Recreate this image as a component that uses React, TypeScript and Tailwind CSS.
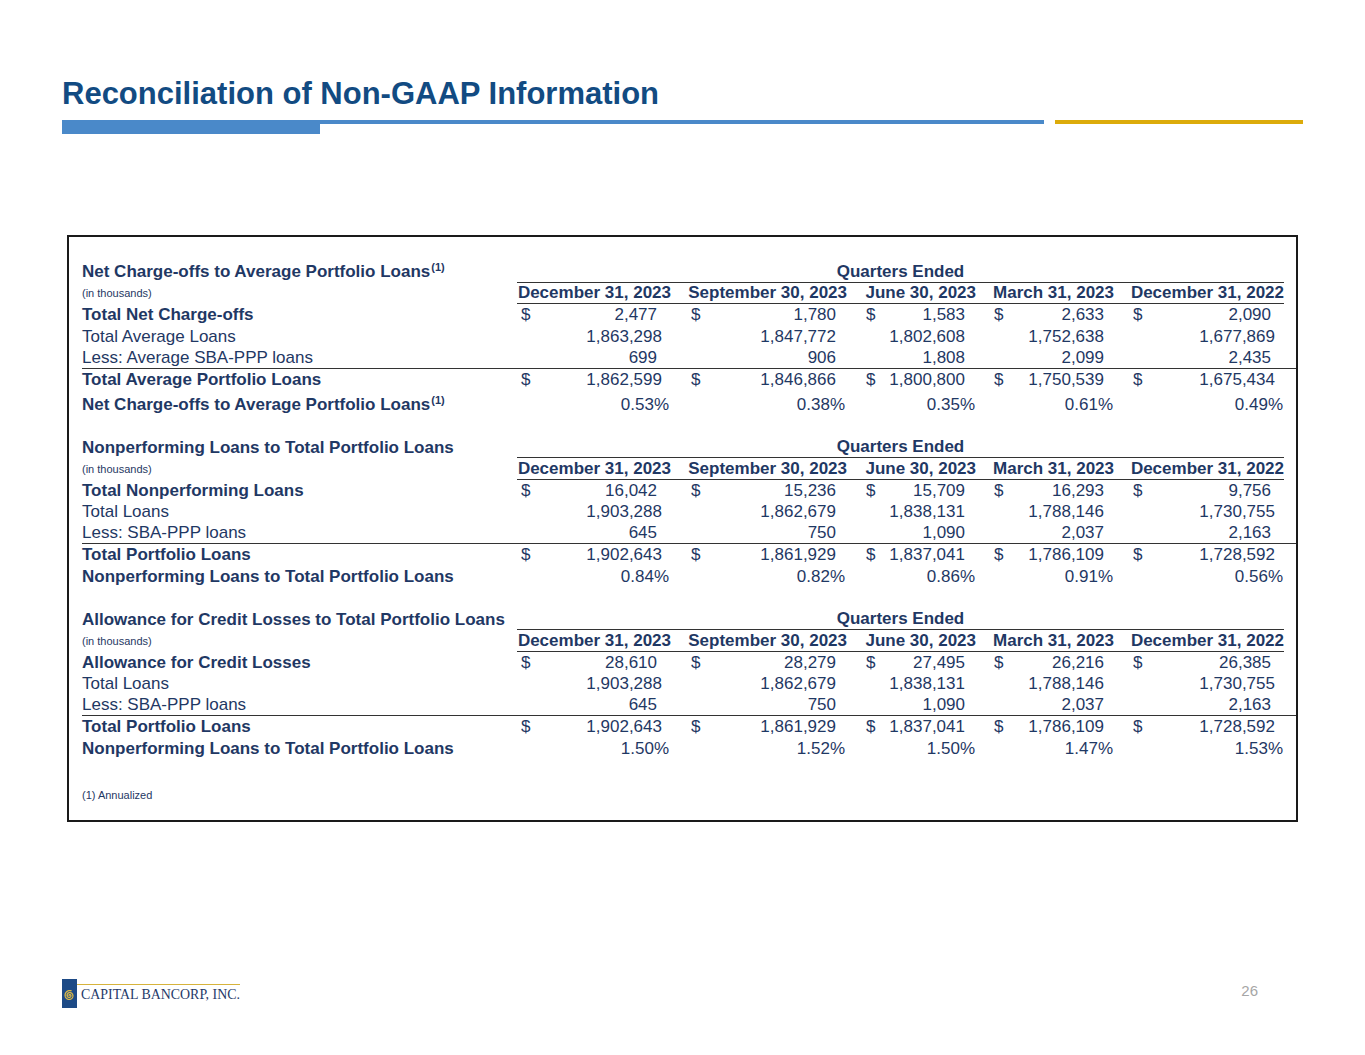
import React from "react";

type Col = { hp: string; np: string; nps: string; pp: string; dl: string };

const COLS: Col[] = [
  { hp: "pr-[16px]", np: "pr-[25px]", nps: "pr-[30px]", pp: "pr-[18px]", dl: "pl-[4px]" },
  { hp: "pr-[18px]", np: "pr-[29px]", nps: "pr-[29px]", pp: "pr-[20px]", dl: "pl-[4px]" },
  { hp: "pr-[17px]", np: "pr-[28px]", nps: "pr-[28px]", pp: "pr-[18px]", dl: "pl-[1px]" },
  { hp: "pr-[16px]", np: "pr-[26px]", nps: "pr-[26px]", pp: "pr-[17px]", dl: "pl-[1px]" },
  { hp: "pr-0", np: "pr-[9px]", nps: "pr-[13px]", pp: "pr-[1px]", dl: "pl-[3px]" },
];

const DATES = [
  "December 31, 2023",
  "September 30, 2023",
  "June 30, 2023",
  "March 31, 2023",
  "December 31, 2022",
];

const GRID = "grid grid-cols-[435px_170px_178px_128px_137px_154px]";
const TXT = "text-[#1f3864]";

type Row = {
  label: string;
  bold?: boolean;
  sup?: boolean;
  dollar?: boolean;
  pct?: boolean;
  values: string[];
  line?: boolean;
  extraTop?: boolean;
};

type Section = { title: string; titleSup?: boolean; rows: Row[] };

const SECTIONS: Section[] = [
  {
    title: "Net Charge-offs to Average Portfolio Loans",
    titleSup: true,
    rows: [
      { label: "Total Net Charge-offs", bold: true, dollar: true, values: ["2,477", "1,780", "1,583", "2,633", "2,090"] },
      { label: "Total Average Loans", values: ["1,863,298", "1,847,772", "1,802,608", "1,752,638", "1,677,869"] },
      { label: "Less: Average SBA-PPP loans", values: ["699", "906", "1,808", "2,099", "2,435"], line: true },
      { label: "Total Average Portfolio Loans", bold: true, dollar: true, values: ["1,862,599", "1,846,866", "1,800,800", "1,750,539", "1,675,434"] },
      { label: "Net Charge-offs to Average Portfolio Loans", bold: true, sup: true, pct: true, extraTop: true, values: ["0.53%", "0.38%", "0.35%", "0.61%", "0.49%"] },
    ],
  },
  {
    title: "Nonperforming Loans to Total Portfolio Loans",
    rows: [
      { label: "Total Nonperforming Loans", bold: true, dollar: true, values: ["16,042", "15,236", "15,709", "16,293", "9,756"] },
      { label: "Total Loans", values: ["1,903,288", "1,862,679", "1,838,131", "1,788,146", "1,730,755"] },
      { label: "Less: SBA-PPP loans", values: ["645", "750", "1,090", "2,037", "2,163"], line: true },
      { label: "Total Portfolio Loans", bold: true, dollar: true, values: ["1,902,643", "1,861,929", "1,837,041", "1,786,109", "1,728,592"] },
      { label: "Nonperforming Loans to Total Portfolio Loans", bold: true, pct: true, values: ["0.84%", "0.82%", "0.86%", "0.91%", "0.56%"] },
    ],
  },
  {
    title: "Allowance for Credit Losses to Total Portfolio Loans",
    rows: [
      { label: "Allowance for Credit Losses", bold: true, dollar: true, values: ["28,610", "28,279", "27,495", "26,216", "26,385"] },
      { label: "Total Loans", values: ["1,903,288", "1,862,679", "1,838,131", "1,788,146", "1,730,755"] },
      { label: "Less: SBA-PPP loans", values: ["645", "750", "1,090", "2,037", "2,163"], line: true },
      { label: "Total Portfolio Loans", bold: true, dollar: true, values: ["1,902,643", "1,861,929", "1,837,041", "1,786,109", "1,728,592"] },
      { label: "Nonperforming Loans to Total Portfolio Loans", bold: true, pct: true, values: ["1.50%", "1.52%", "1.50%", "1.47%", "1.53%"] },
    ],
  },
];

function Sup() {
  return <span className="relative -top-[4px] text-[11px] font-bold ml-[1px]">(1)</span>;
}

function SectionBlock({ s, first }: { s: Section; first: boolean }) {
  return (
    <div className={first ? "" : "mt-[21.5px]"}>
      <div className={`${GRID} h-[21.5px]`}>
        <div className="flex items-center font-bold whitespace-nowrap">
          {s.title}
          {s.titleSup && <Sup />}
        </div>
        <div className="col-span-5 flex items-center justify-center font-bold border-b border-[#333]">
          Quarters Ended
        </div>
      </div>
      <div className={`${GRID} h-[21.5px]`}>
        <div className="flex items-end pb-[2px] text-[11px]">(in thousands)</div>
        {DATES.map((d, i) => (
          <div
            key={d}
            className={`flex items-center justify-end font-bold whitespace-nowrap border-b border-[#333] ${COLS[i].hp}`}
          >
            {d}
          </div>
        ))}
      </div>
      {s.rows.map((r, ri) => (
        <div
          key={ri}
          className={`${GRID} h-[21.5px] ${r.line ? "border-b border-[#333]" : ""} ${r.extraTop ? "mt-[3.5px]" : ""}`}
        >
          <div className={`flex items-center whitespace-nowrap ${r.bold ? "font-bold" : ""}`}>
            {r.label}
            {r.sup && <Sup />}
          </div>
          {r.values.map((v, i) => (
            <div
              key={i}
              className={`flex items-center ${r.dollar ? "justify-between" : "justify-end"} ${COLS[i].dl} ${
                r.pct ? COLS[i].pp : v.length < 9 ? COLS[i].nps : COLS[i].np
              }`}
            >
              {r.dollar && <span>$</span>}
              <span>{v}</span>
            </div>
          ))}
        </div>
      ))}
    </div>
  );
}

function spiralPath() {
  const cx = 7.5;
  const cy = 16.5;
  const pts: string[] = [];
  const turns = 2.3;
  const steps = 120;
  for (let k = 0; k <= steps; k++) {
    const t = (k / steps) * turns * Math.PI * 2;
    const r = 0.4 + (t / (turns * Math.PI * 2)) * 4.6;
    const x = cx + r * Math.cos(t + Math.PI);
    const y = cy + r * Math.sin(t + Math.PI);
    pts.push(`${k === 0 ? "M" : "L"}${x.toFixed(2)} ${y.toFixed(2)}`);
  }
  return pts.join(" ");
}

function Logo() {
  return (
    <div className="flex items-start">
      <svg width="15" height="29" viewBox="0 0 15 29" className="block">
        <rect x="0" y="0" width="15" height="29" fill="#1d4a86" />
        <path d={spiralPath()} fill="none" stroke="#d9b84a" strokeWidth="1.3" strokeLinecap="round" />
      </svg>
      <div className="flex flex-col">
        <div className="mt-[4.5px] h-[1.5px] w-[163px] bg-[#d6b33c]" />
        <div className="ml-[4px] mt-[2px] text-[13.9px] leading-[16px] font-['Liberation_Serif',serif] text-[#1f3a6a] whitespace-nowrap">
          CAPITAL BANCORP, INC.
        </div>
      </div>
    </div>
  );
}

export default function App() {
  return (
    <div className="w-[1365px] h-[1055px] bg-white font-['Liberation_Sans',Arial,sans-serif] flex flex-col overflow-hidden">
      <div className="pl-[62px] mt-[78px] h-[31px] text-[31px] leading-[31px] font-bold text-[#124b82] whitespace-nowrap">
        Reconciliation of Non-GAAP Information
      </div>
      <div className="mt-[11px] pl-[62px] flex items-start">
        <div className="w-[258px] h-[14px] bg-[#4a89c9]" />
        <div className="w-[724px] h-[3.5px] bg-[#4a89c9]" />
        <div className="ml-[11px] w-[248px] h-[3.5px] bg-[#dcab0a]" />
      </div>
      <div className="ml-[67px] mt-[101px] w-[1231px] h-[587px] border-2 border-[#1a1a1a] pl-[13px] pt-[24px]">
        <div className={`text-[17px] leading-[17px] ${TXT}`}>
          {SECTIONS.map((s, i) => (
            <SectionBlock key={i} s={s} first={i === 0} />
          ))}
          <div className="mt-[29px] text-[11px] leading-[14px]">(1) Annualized</div>
        </div>
      </div>
      <div className="mt-[157px] pl-[62px] pr-[107px] flex justify-between items-start">
        <Logo />
        <div className="mt-[3px] text-[15px] leading-[18px] text-[#a6a6a6]">26</div>
      </div>
    </div>
  );
}
